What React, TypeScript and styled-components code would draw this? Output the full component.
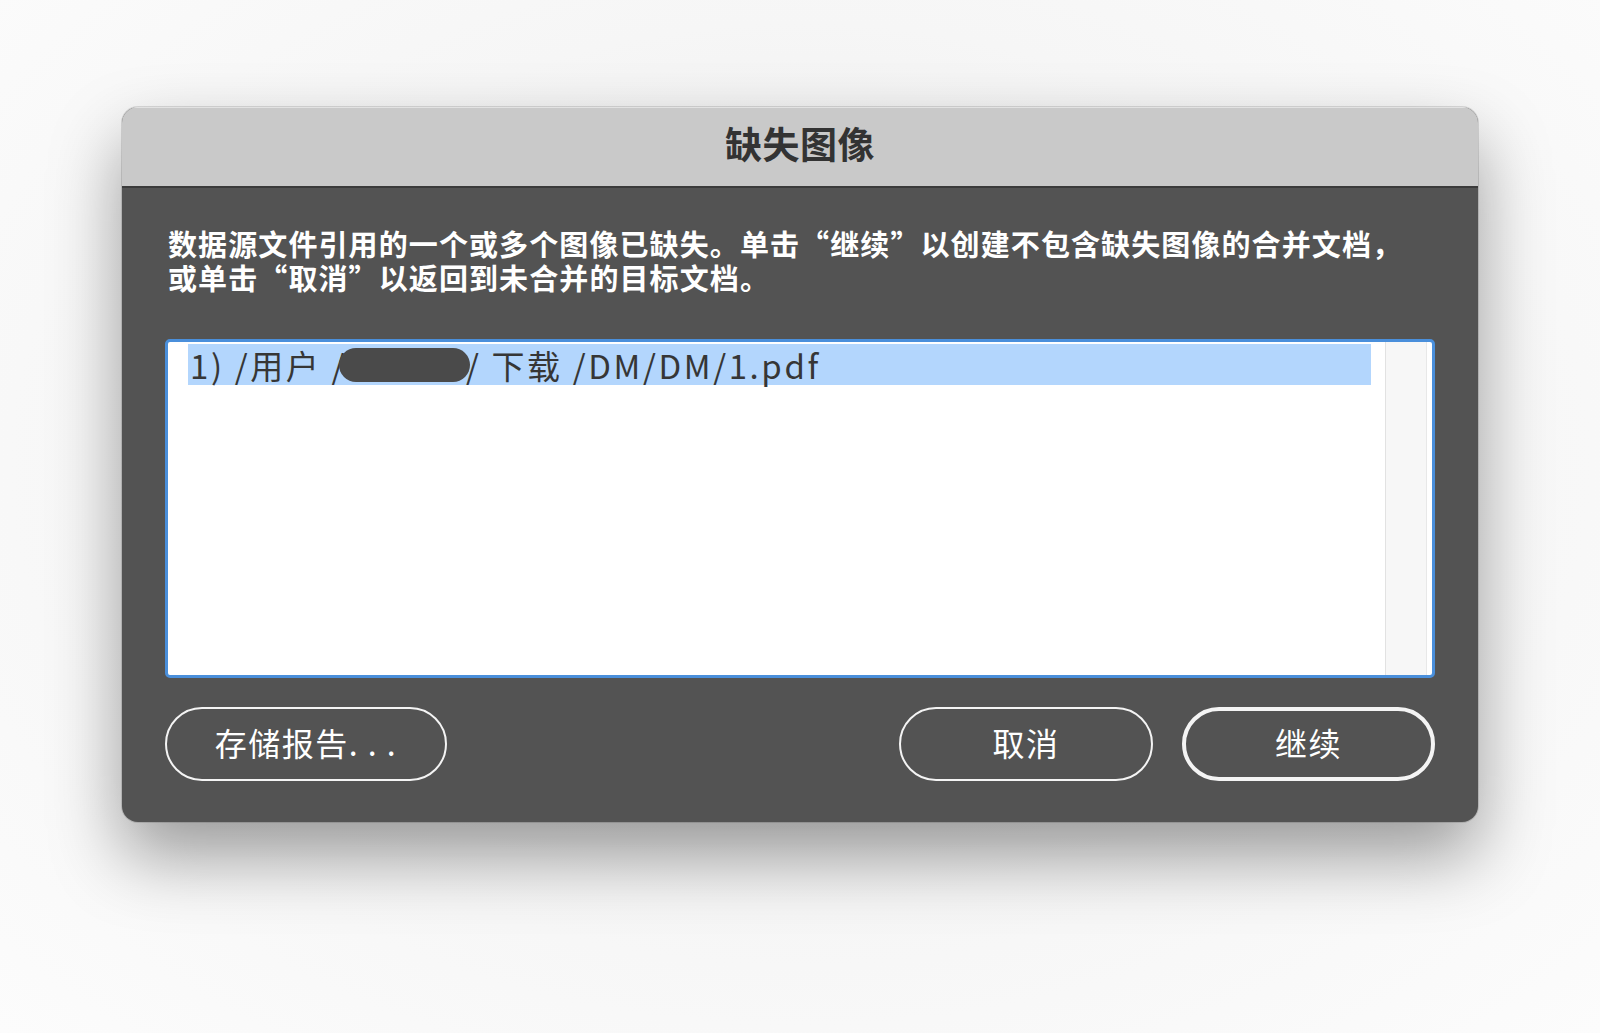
import React from 'react';
import styled, { createGlobalStyle } from 'styled-components';

const GlobalStyle = createGlobalStyle`
  html, body {
    margin: 0;
    padding: 0;
    background: #f7f7f7;
  }
  body {
    font-family: "Noto Sans CJK SC", "Noto Sans", sans-serif;
  }
`;

const Page = styled.div`
  width: 1600px;
  height: 1033px;
  box-sizing: border-box;
  padding: 107px 0 0 122px;
  background: radial-gradient(ellipse at 50% 45%, #e9e9e9 0%, #f6f6f6 55%, #fcfcfc 100%);
`;

const Dialog = styled.div`
  width: 1356px;
  height: 715px;
  border-radius: 16px;
  background: #535353;
  overflow: hidden;
  display: flex;
  flex-direction: column;
  box-shadow: 0 34px 70px rgba(0, 0, 0, 0.38), 0 0 0 1px rgba(0, 0, 0, 0.12);
`;

const TitleBar = styled.div`
  height: 81px;
  flex: none;
  box-sizing: border-box;
  padding-bottom: 8px;
  display: flex;
  align-items: center;
  justify-content: center;
  background: #c9c9c9;
  border-top: 1px solid #e2e2e2;
  border-bottom: 2px solid #3b3b3b;
  color: #333;
  font-size: 37px;
  font-weight: 700;
  letter-spacing: 0.5px;
`;

const Body = styled.div`
  flex: 1;
  display: flex;
  flex-direction: column;
  padding: 38px 43px 40px;
`;

const Message = styled.p`
  margin: 0 0 0 3px;
  color: #fff;
  font-size: 29px;
  font-weight: 700;
  line-height: 34px;
  letter-spacing: 1.1px;
`;

const ListBox = styled.div`
  margin-top: 45px;
  height: 339px;
  box-sizing: border-box;
  border: 3px solid #4a8fdb;
  border-radius: 5px;
  background: #fff;
  display: grid;
  grid-template-columns: 1fr 42px;
  padding-right: 5px;
`;

const Rows = styled.div`
  padding: 2px 14px 0 20px;
`;

const Row = styled.div<{ $selected?: boolean }>`
  height: 41px;
  display: flex;
  align-items: center;
  padding-left: 2px;
  background: ${(p) => (p.$selected ? '#b3d6fd' : 'transparent')};
  color: #363636;
  font-size: 33px;
  font-weight: 400;
  letter-spacing: 2.6px;
  white-space: pre;
`;

const Redacted = styled.span`
  display: inline-block;
  width: 131px;
  height: 34px;
  margin-left: -8px;
  margin-right: -4px;
  border-radius: 17px;
  background: #4a4a4a;
`;

const ScrollTrack = styled.div`
  background: #f7f7f7;
  border-left: 1px solid #e2e2e2;
  border-right: 1px solid #e8e8e8;
`;

const Actions = styled.div`
  margin-top: 29px;
  display: flex;
  gap: 29px;
`;

const Spacer = styled.div`
  flex: 1;
`;

const Button = styled.button<{ $width: number; $default?: boolean }>`
  width: ${(p) => p.$width}px;
  height: 74px;
  box-sizing: border-box;
  border-radius: 37px;
  border: ${(p) => (p.$default ? '4px' : '2px')} solid #f4f4f4;
  background: transparent;
  color: #fff;
  font-family: "Noto Sans CJK SC", "Noto Sans", sans-serif;
  font-size: 32px;
  font-weight: 400;
  letter-spacing: 1.5px;
  padding: 0 0 4px;
  cursor: pointer;
`;

export default function App() {
  return (
    <>
      <GlobalStyle />
      <Page>
        <Dialog>
          <TitleBar>缺失图像</TitleBar>
          <Body>
            <Message>
              数据源文件引用的一个或多个图像已缺失。单击“继续”以创建不包含缺失图像的合并文档，
              <br />
              或单击“取消”以返回到未合并的目标文档。
            </Message>
            <ListBox>
              <Rows>
                <Row $selected>
                  1) /用户 /<Redacted />/ 下载 /DM/DM/1.pdf
                </Row>
              </Rows>
              <ScrollTrack />
            </ListBox>
            <Actions>
              <Button $width={282}>存储报告. . .</Button>
              <Spacer />
              <Button $width={254}>取消</Button>
              <Button $width={253} $default>
                继续
              </Button>
            </Actions>
          </Body>
        </Dialog>
      </Page>
    </>
  );
}
